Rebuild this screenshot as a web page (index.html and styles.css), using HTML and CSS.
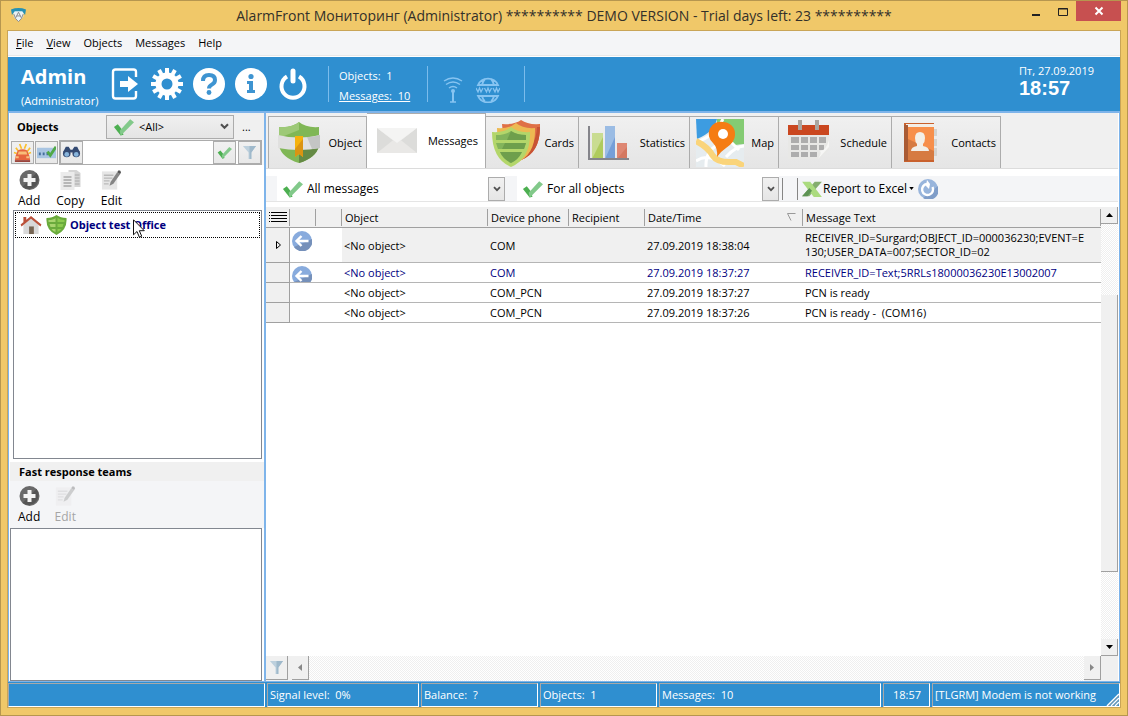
FILE: index.html
```html
<!DOCTYPE html>
<html lang="en">
<head>
<meta charset="utf-8">
<title>AlarmFront</title>
<link rel="stylesheet" href="styles.css">
</head>
<body>
<svg class="defs" aria-hidden="true">
  <symbol id="check" viewBox="0 0 22 18"><path fill="#4caf50" d="M1 9l4-3 4 5 2 6-3 1z"/><path fill="#82c98a" d="M8 18l-1-5L18 1l4 3L9 17z"/></symbol>
  <symbol id="chevron" viewBox="0 0 10 8"><path fill="none" stroke="#505050" stroke-width="2.4" d="M1 1.500l4 4 4-4"/></symbol>
  <symbol id="funnel" viewBox="0 0 16 16"><path fill="#bdd0dd" d="M1 1h14L10 8v7H7V8z"/><path fill="#9fb9cb" d="M8 1h7l-5 7v7H8z"/></symbol>
  <symbol id="add" viewBox="0 0 20 20"><circle cx="10" cy="10" r="10" fill="#696969"/><path fill="#555" d="M17 3a10 10 0 0 1-14 14z"/><path fill="#f4f4f4" d="M8 4h4v4h4v4h-4v4H8v-4H4V8h4z"/></symbol>
  <symbol id="edit" viewBox="0 0 22 20"><path fill="#e6e6e6" d="M1 1h16v19H1z"/><path stroke="#b9b9b9" stroke-width="1.400" d="M3 5h10M3 8h9M3 11h6M3 14h5"/><path fill="#858585" d="M10 12l7-10 3 2-7 10-4 2z"/><path fill="#555" d="M17 2l1-2h2l1 2-1 2z"/></symbol>
  <symbol id="shield" viewBox="0 0 20 20"><path fill="#6aab3c" d="M0 3q6 0 10-3 4 3 10 3 1 12-10 17Q-1 15 0 3z"/><path fill="#a8d46e" d="M2 5q5 0 7-2v4H2zM3 9h6v3H4zM5 14h4v3q-3-1-4-3z"/><path fill="#8ccb4e" d="M11 3q3 2 7 2v2h-7zM11 9h6l-1 3h-5zM11 14h4q-2 2-4 3z"/></symbol>
  <symbol id="incoming" viewBox="0 0 20 20"><circle cx="10" cy="10" r="10" fill="#88abdd"/><path fill="#7590ba" d="M20 8A10 10 0 0 1 2 16z"/><path fill="none" stroke="#fff" stroke-width="2.400" d="M16.500 10H5M9.500 5L4.500 10l5 5"/></symbol>
  <symbol id="doc" viewBox="0 0 20 20"><path fill="#d5d5d5" d="M8 0h8l4 3v14H8z"/><path stroke="#aaa" d="M14 5h5M14 8h5M14 11h5M14 14h5"/><path fill="#ebebeb" d="M0 2h14v18H0z"/><path stroke="#a7a7a7" d="M3 7h8M3 10h8M3 13h8M3 16h8" stroke-width="1.400"/></symbol>
</svg>
<div class="window">
  <header class="titlebar">
    <svg class="app-icon" viewBox="0 0 16 16"><path fill="#e8f2f5" d="M2 2l6-1 6 1-1 8-5 5-5-5z"/><path fill="#2591b4" d="M0 2q8-3 16 0l-1 6-3-4H4L1 8z"/><path fill="none" stroke="#888" d="M3 7l2 5 3 3 3-3 2-5M5 11l3-6 3 6M6 9h4"/></svg>
    <h1>AlarmFront Мониторинг (Administrator) ********** DEMO VERSION - Trial days left: 23 **********</h1>
    <div class="window-buttons">
      <button aria-label="Minimize"><svg viewBox="0 0 10 10"><path fill="#222" d="M1 8h8v2H1z"/></svg></button>
      <button aria-label="Maximize"><svg viewBox="0 0 10 10"><path fill="none" stroke="#222" d="M.500 2.500h9v7h-9zM0 3h10"/></svg></button>
      <button class="close" aria-label="Close"><svg viewBox="0 0 10 10"><path fill="none" stroke="#fff" stroke-width="2" d="M1.500 1.500l7 7M8.500 1.500l-7 7"/></svg></button>
    </div>
  </header>
  <div class="client">
    <nav class="menu">
      <button><u>F</u>ile</button><button><u>V</u>iew</button><button>Objects</button><button>Messages</button><button>Help</button>
    </nav>
    <div class="banner">
      <div class="user"><strong>Admin</strong><span>(Administrator)</span></div>
      <div class="actions">
        <button aria-label="Log out"><svg viewBox="0 0 32 32"><path fill="none" stroke="#fff" stroke-width="2.400" d="M27 9V4q0-2.500-2.500-2.500h-18Q4 1.500 4 4v24q0 2.500 2.500 2.500h18Q27 30.500 27 28v-5"/><path fill="#fff" d="M11 13h8V8l10 8-10 8v-5h-8z"/></svg></button>
        <button aria-label="Settings"><svg viewBox="0 0 32 32"><circle cx="16" cy="16" r="8.500" fill="none" stroke="#fff" stroke-width="6"/><path stroke="#fff" stroke-width="4" d="M16 0v6M16 26v6M0 16h6M26 16h6M8 2.100l2.500 4.400M21.500 25.500l2.500 4.400M24 2.100l-2.500 4.400M10.500 25.500L8 29.900M2.100 8l4.400 2.500M25.500 21.500l4.400 2.500M29.900 8l-4.400 2.500M6.500 21.500L2.100 24"/></svg></button>
        <button aria-label="Help"><svg viewBox="0 0 32 32"><circle cx="16" cy="16" r="16" fill="#fff"/><path fill="none" stroke="#3e94d1" stroke-width="4" d="M10 13q0-6 6-6t6 5q0 3-3 4.500-3 1.500-3 4"/><circle cx="16" cy="24.500" r="2.400" fill="#3e94d1"/></svg></button>
        <button aria-label="Information"><svg viewBox="0 0 32 32"><circle cx="16" cy="16" r="16" fill="#fff"/><circle cx="16" cy="8.500" r="2.600" fill="#3e94d1"/><path fill="#3e94d1" d="M12 13h6v9h2v3h-8v-3h2v-6h-2z"/></svg></button>
        <button aria-label="Power"><svg viewBox="0 0 32 32"><path fill="none" stroke="#fff" stroke-width="4" d="M10 8.500a11.500 11.500 0 1 0 12 0"/><path stroke="#fff" stroke-width="5" stroke-linecap="round" d="M16 3v10"/></svg></button>
      </div>
      <div class="counts"><span>Objects:&nbsp; 1</span><a href="#messages">Messages:&nbsp; 10</a></div>
      <div class="signals">
        <svg viewBox="0 0 24 26"><g fill="none" stroke="#87c4f1" stroke-width="1.500"><path d="M3 4q9-6 18 0M5 7.500q7-5 14 0M8 11q4-3 8 0M9 25h6"/><path stroke-width="2" d="M12 14v11"/></g><circle cx="12" cy="14" r="2" fill="#87c4f1"/></svg>
        <svg viewBox="0 0 24 26"><g fill="none" stroke="#87c4f1" stroke-width="1.800"><path d="M2 8a11 11 0 0 1 20 0zM2 19a11 11 0 0 0 20 0zM9 2Q7 4 6 8M15 2q2 2 3 6M6 19q1 4 3 5M18 19q-1 4-3 5"/><path stroke-width="1.300" d="M0 11l2 4 1.500-4L5 15l2-4M8.500 11l2 4 1.500-4 1.500 4 2-4M17 11l2 4 1.500-4 1.500 4 2-4"/></g></svg>
      </div>
      <div class="clock"><span>Пт, 27.09.2019</span><time>18:57</time></div>
    </div>
    <div class="main">
      <aside class="side">
        <div class="side-head">
          <h2>Objects</h2>
          <div class="combo raised"><svg class="tick"><use href="#check"/></svg><select aria-label="Object filter"><option>&lt;All&gt;</option></select><svg class="chev"><use href="#chevron"/></svg></div>
          <button class="more" aria-label="More">...</button>
        </div>
        <div class="search-row">
          <button class="mini" aria-label="Alarms"><svg viewBox="0 0 20 20"><path stroke="#fbc02d" stroke-width="1.800" d="M3 5l3 4M7 1l2 5M14 1l-2 5M18 5l-3 4M1 10l3 1M19 10l-3 1"/><path fill="#e6643e" d="M5 8q5-3 10 0l2 5 1 5H2l1-5z"/><path fill="#f8bd79" d="M6 9h8l1 3H5zM3 14h3v2H3zM14 14h3v2h-3z"/><path fill="#9b443b" d="M2 18h16v2H2z"/></svg></button>
          <button class="mini" aria-label="Connection"><svg viewBox="0 0 20 20"><path fill="#a9c5e2" d="M0 5h20v11H0z"/><path fill="#456f9b" d="M2 10h2v3H2zM6 10h2v3H6zM10 10h2v3h-2z"/><path fill="none" stroke="#50a947" stroke-width="3" d="M11 9l3 4 6-9"/></svg></button>
          <div class="search">
            <button class="mini" aria-label="Find"><svg viewBox="0 0 20 20"><path fill="#344a72" d="M4 4h3l2 3h2l2-3h3l3 6H1z"/><circle cx="5" cy="11" r="4" fill="#344a72"/><circle cx="15" cy="11" r="4" fill="#344a72"/><circle cx="5" cy="12" r="2.500" fill="#88b5dc"/><circle cx="15" cy="12" r="2.500" fill="#88b5dc"/></svg></button>
            <input type="text" aria-label="Search objects">
            <button class="mini" aria-label="Apply"><svg class="tick-small"><use href="#check"/></svg></button>
            <button class="mini" aria-label="Filter"><svg class="funnel-small"><use href="#funnel"/></svg></button>
          </div>
        </div>
        <div class="tools">
          <button><svg><use href="#add"/></svg>Add</button><button><svg><use href="#doc"/></svg>Copy</button><button><svg><use href="#edit"/></svg>Edit</button>
        </div>
        <ul class="list objects">
          <li><svg class="house" viewBox="0 0 22 20"><path fill="#d8d8d8" d="M3 9l8-7 8 7v10H3z"/><path fill="#756452" d="M9 11h5v8H9z"/><path fill="#bb513a" d="M0 9L11 0l11 9-1 2-10-8L1 11zM3 1h3v4L3 7z"/></svg><svg class="badge"><use href="#shield"/></svg>Object test Office
            <svg class="pointer" viewBox="0 0 12 19"><path fill="#fff" stroke="#111" d="M.500.800v15l3.500-3.300 2.400 5.700 2.300-1-2.400-5.500h5z"/></svg></li>
        </ul>
        <h2 class="teams-title">Fast response teams</h2>
        <div class="tools teams">
          <button><svg><use href="#add"/></svg>Add</button><button disabled><svg><use href="#edit"/></svg>Edit</button>
        </div>
        <ul class="list team-list"></ul>
      </aside>
      <main class="content" id="messages">
        <div class="tabs" role="tablist">
          <button role="tab" class="tab t-object"><svg viewBox="0 0 48 48"><path fill="#80b756" d="M4 8q13 1 20-5 7 6 20 5v14H4z"/><path fill="#9dc977" d="M4 8q13 1 20-5v8L4 19z"/><path fill="#80b756" d="M4 27h40q-3 12-20 17Q7 39 4 27z"/><path fill="#658a45" d="M24 27h20q-3 12-20 17z"/><path fill="#e0e0df" d="M3 16q21 5 42 0v13q-21 4-42 0z"/><path fill="#c4c5c4" d="M32 18q7 0 13-2v13l-8 1z"/><path fill="#f5b20d" d="M20 17h8v21l-4-3-4 3z"/><path fill="#db9412" d="M28 20v18l-4-3-4 3v-8z"/></svg><span>Object</span></button>
          <button role="tab" class="tab t-messages" aria-selected="true"><svg viewBox="0 0 48 48"><path fill="#e9e9e7" d="M4 11h40v25H4z"/><path fill="#dcdcda" d="M4 11l18 14L4 36zM44 11L26 25l18 11z"/><path fill="#e9e8e6" d="M4 36l20-16 20 16z"/><path fill="#f4f4f3" d="M4 11h40L24 26z"/></svg><span>Messages</span></button>
          <button role="tab" class="tab t-cards"><svg viewBox="0 0 48 48"><path fill="#df7046" d="M10 5Q22 6 29 1q7 5 19 4 1 28-19 36-18-10-19-36z"/><path fill="#c85334" d="M45 8h3Q48 34 29 41l-3-4Q44 30 45 8z"/><path fill="#edb952" d="M5 9q12 1 19-5 7 6 19 5 1 27-19 35Q5 36 5 9z"/><path fill="#b3d66a" d="M0 13q12 1 19-5 7 6 19 5 1 26-19 35Q0 40 0 13z"/><path fill="#83b45b" d="M4 16q9 0 15-4 6 4 15 4v5H4zM4 24h30l-2 6H6zM8 33h22q-4 8-11 11-8-4-11-11z"/><path fill="#659646" d="M19 12q6 4 15 4v5H15zM13 24h21l-2 6H10zM8 33h22q-4 8-11 11-8-4-11-11z" opacity=".7"/></svg><span>Cards</span></button>
          <button role="tab" class="tab t-stats"><svg viewBox="0 0 48 48"><path fill="#c9dc91" d="M7 14h11v26H7z"/><path fill="#afcb5d" d="M18 18v22H7z"/><path fill="#9bbce4" d="M20 7h10v33H20z"/><path fill="#759fd8" d="M30 18v22H20z"/><path fill="#de8773" d="M32 24h10v16H32z"/><path fill="#d47861" d="M42 28v12H32z"/><path fill="none" stroke="#85858b" stroke-width="2" d="M4 7v33h40"/></svg><span>Statistics</span></button>
          <button role="tab" class="tab t-map"><svg viewBox="0 0 48 48"><path fill="#e6ecef" d="M0 0h48v48H0z"/><path fill="#84cb73" d="M21 0h27v25l-9 1L21 7z"/><path fill="#3d9ce1" d="M0 0h21q-3 13-20 20z"/><path fill="none" stroke="#fff" stroke-width="3" d="M0 23Q18 18 27 0M10 48q-1-18 16-24M30 38Q40 27 48 27M0 42q13-9 29 5M20 8l23 23"/><path fill="none" stroke="#fad47a" stroke-width="6" d="M0 22q12 6 17 15 4 6 16 6h7l8 4"/><path fill="#f57c13" d="M27 3a12 12 0 0 1 12 13q0 7-9 13-6 4-9 9 1-9-4-14a12 12 0 0 1 10-21z"/><circle cx="27" cy="15" r="5" fill="#fff"/></svg><span>Map</span></button>
          <button role="tab" class="tab t-schedule"><svg viewBox="0 0 48 48"><path fill="#e8e8e6" d="M3 14h41v17L33 40H3z"/><path fill="#ca4720" d="M3 6h41v10H3z"/><path fill="#aaa59f" d="M13 1h4v10h-4zM30 1h4v10h-4z"/><path fill="#adadad" d="M6 18h8v6H6zM16 18h7v6h-7zM25 18h7v6h-7zM34 18h7v6h-7zM6 26h8v5H6zM16 26h7v5h-7zM25 26h7v5h-7zM34 26h5v5h-5zM6 33h8v5H6zM16 33h7v5h-7zM25 33h7v5h-7z"/><path fill="#f6f6f5" d="M44 21v7L33 40q4-6 2-8 6 0 9-11z"/></svg><span>Schedule</span></button>
          <button role="tab" class="tab t-contacts"><svg viewBox="0 0 48 48"><path fill="#d5d3cf" d="M34 10h5v7h-5zM34 20h5v7h-5zM34 29h5v8h-5z"/><path fill="#c9612d" d="M6 4h30v39H6z"/><path fill="#f3eee7" d="M8 5h28v3H8z"/><path fill="#f78f4b" d="M10 8h26v33H10z"/><path fill="#d67b42" d="M36 32v9H10V20z"/><path fill="#aa5b34" d="M6 6h4v36H6z"/><path fill="#f2efe9" d="M17 19q0-6 5-6t5 6q0 4-2 6v2q6 1 6 5H13q0-4 6-5v-2q-2-2-2-6z"/></svg><span>Contacts</span></button>
        </div>
        <div class="filterbar">
          <div class="combo flat first"><svg class="tick"><use href="#check"/></svg><select aria-label="Message type"><option>All messages</option></select><span class="drop"><svg class="chev"><use href="#chevron"/></svg></span></div>
          <div class="combo flat second"><svg class="tick"><use href="#check"/></svg><select aria-label="Objects shown"><option>For all objects</option></select><span class="drop"><svg class="chev"><use href="#chevron"/></svg></span></div>
          <span class="sep"></span>
          <button class="report"><svg class="excel" viewBox="0 0 22 20"><path fill="#84ad6f" d="M14 2h8L8 18H0z"/><path fill="#abdb7f" d="M0 2h9l13 17h-9z"/><path fill="#5d9354" d="M0 18h6l5-6-3-3z"/></svg>Report to Excel<svg class="caret" viewBox="0 0 6 4"><path d="M0 0h6L3 4z"/></svg></button>
          <button class="refresh" aria-label="Refresh"><svg viewBox="0 0 20 20"><circle cx="10" cy="10" r="10" fill="#98b5dc"/><path fill="#7f9dc8" d="M20 7A10 10 0 0 1 5 19z"/><path fill="none" stroke="#fff" stroke-width="2.400" d="M14.500 8A5.500 5.500 0 1 1 9 5"/><path fill="#fff" d="M9 1l3 4-1 5-3-3z"/></svg></button>
        </div>
        <div class="grid-area">
          <div class="table-wrap">
            <table>
              <colgroup><col class="c-mark"><col class="c-icon"><col class="c-icon"><col class="c-object"><col class="c-device"><col class="c-recipient"><col class="c-date"><col></colgroup>
              <thead><tr><th><svg class="lines" viewBox="0 0 18 10"><path stroke="#000" d="M2 .500h16M2 3.500h16M2 6.500h16M2 9.500h16M0 .500h1M0 3.500h1M0 6.500h1M0 9.500h1"/></svg></th><th></th><th></th><th>Object</th><th>Device phone</th><th>Recipient</th><th>Date/Time<svg class="sort" viewBox="0 0 9 8"><path fill="none" stroke="#999" d="M8.500.500h-8L4 7.500"/></svg></th><th>Message Text</th></tr></thead>
              <tbody>
                <tr class="current"><th scope="row"><svg class="marker" viewBox="0 0 5 8"><path fill="none" stroke="#000" d="M.500.500v7L4.500 4z"/></svg></th><td class="ic"><svg><use href="#incoming"/></svg></td><td></td><td>&lt;No object&gt;</td><td>COM</td><td></td><td>27.09.2019 18:38:04</td><td class="msg">RECEIVER_ID=Surgard;OBJECT_ID=000036230;EVENT=E130;USER_DATA=007;SECTOR_ID=02</td></tr>
                <tr class="unread"><th scope="row"></th><td class="ic"><div class="clip"><svg><use href="#incoming"/></svg></div></td><td></td><td>&lt;No object&gt;</td><td>COM</td><td></td><td>27.09.2019 18:37:27</td><td>RECEIVER_ID=Text;5RRLs18000036230E13002007</td></tr>
                <tr><th scope="row"></th><td></td><td></td><td>&lt;No object&gt;</td><td>COM_PCN</td><td></td><td>27.09.2019 18:37:27</td><td>PCN is ready</td></tr>
                <tr><th scope="row"></th><td></td><td></td><td>&lt;No object&gt;</td><td>COM_PCN</td><td></td><td>27.09.2019 18:37:26</td><td>PCN is ready -&nbsp; (COM16)</td></tr>
              </tbody>
            </table>
          </div>
          <div class="vscroll"><button aria-label="Scroll up"><svg viewBox="0 0 7 4"><path d="M3.500 0L7 4H0z"/></svg></button><span class="thumb"></span><button aria-label="Scroll down"><svg viewBox="0 0 7 4"><path d="M0 0h7L3.500 4z"/></svg></button></div>
          <div class="hscroll"><button class="hfilter" aria-label="Filter rows"><svg><use href="#funnel"/></svg></button><button class="h-left" aria-label="Scroll left"><svg viewBox="0 0 4 7"><path fill="#888" d="M4 0v7L0 3.500z"/></svg></button><span class="track"></span><button aria-label="Scroll right"><svg viewBox="0 0 4 7"><path fill="#888" d="M0 0l4 3.500L0 7z"/></svg></button></div>
          <div class="corner"></div>
        </div>
      </main>
    </div>
    <footer class="status">
      <span class="s-blank"></span><span class="s-signal">Signal level:&nbsp; 0%</span><span class="s-balance">Balance:&nbsp; ?</span><span class="s-objects">Objects:&nbsp; 1</span><span class="s-messages">Messages:&nbsp; 10</span><span class="s-time">18:57</span><span class="s-modem"><span class="modem-text">[TLGRM] Modem is not working</span><svg viewBox="0 0 13 13"><path stroke="#fff" stroke-width="1.500" d="M1 13L13 1M5 13l8-8M9 13l4-4"/><path stroke="#a0a0a0" d="M2.500 13L13 2.500M6.500 13L13 6.500M10.500 13l2.500-2.500"/></svg></span>
    </footer>
  </div>
</div>
</body>
</html>
```
FILE: styles.css
```css
* { box-sizing: border-box; }
body { margin: 0; font: 11px/16px "Open Sans", "Noto Sans", sans-serif; color: #000; }
button { margin: 0; padding: 0; border: 0; background: none; font: inherit; color: inherit; }
select, input { font: inherit; color: inherit; border: 0; background: transparent; padding: 0; margin: 0; min-width: 0; }
select { appearance: none; flex: 1; align-self: stretch; }
svg { display: block; flex: none; }
h1, h2, ul { margin: 0; padding: 0; font-size: inherit; }
ul { list-style: none; }
.defs { position: absolute; width: 0; height: 0; }

.window { display: flex; flex-direction: column; min-height: 100vh; background: #f0c869; border: 1px solid #b6964f; padding: 0 6px 7px; }
.titlebar { display: grid; grid-template-columns: 104px 1fr 104px; height: 29px; }
.app-icon { width: 15px; height: 16px; margin: 6px 0 0 4px; }
.titlebar h1 { font-size: 14px; line-height: 30px; font-weight: 400; text-align: center; color: #33302a; white-space: nowrap; }
.window-buttons { display: flex; justify-content: flex-end; align-items: flex-start; }
.window-buttons button { width: 27px; height: 20px; display: grid; place-items: center; }
.window-buttons svg { width: 10px; height: 10px; }
.window-buttons .close { width: 45px; background: #c75050; }

.client { flex: 1; display: flex; flex-direction: column; border: 1px solid #c9a557; background: #fff; }
.menu { display: flex; gap: 13px; height: 25px; padding-left: 8px; background: #f4f5f7; border-bottom: 1px solid #e8e8e8; margin-bottom: 1px; }

.banner { display: flex; height: 54px; background: #2f8fd0; color: #fff; }
.user { width: 96px; padding: 9px 0 0 13px; }
.user strong { display: block; font-size: 20px; line-height: 22px; }
.user span { display: block; line-height: 26px; }
.actions { display: flex; gap: 10px; padding: 11px 0 0 5px; width: 224px; }
.actions button, .actions svg { width: 32px; height: 32px; }
.counts { display: flex; flex-direction: column; width: 99px; padding-left: 10px; border-left: 1px solid #7bbcec; margin: 9px 0; height: 36px; line-height: 20px; }
.counts a { color: #fff; }
.signals { display: flex; gap: 11px; width: 98px; height: 36px; margin: 9px 0; padding: 11px 0 0 13px; border-left: 1px solid #7bbcec; border-right: 1px solid #7bbcec; }
.signals svg { width: 24px; height: 26px; }
.clock { margin-left: auto; width: 101px; padding-top: 6px; }
.clock span, .clock time { display: block; }
.clock time { font: bold 20px/18px "Liberation Sans", Arial, sans-serif; }

.main { flex: 1; display: grid; grid-template-columns: 257px minmax(0, 1fr); border: 1px solid #7eb4ea; border-top-width: 2px; min-height: 571px; }
.side { display: flex; flex-direction: column; background: #fff; border-right: 2px solid #7eb4ea; padding-left: 1px; }
.side-head { display: flex; align-items: center; height: 27px; background: #f0f0f0; padding-left: 7px; }
.side-head h2 { width: 89px; }
.combo { display: flex; align-items: center; }
.raised { width: 128px; height: 24px; border: 1px solid #acacac; background: linear-gradient(#f0f0f0, #e5e5e5); padding: 0 4px 0 6px; gap: 5px; }
.tick { width: 21px; height: 18px; }
.chev { width: 9px; height: 7px; }
.more { margin-left: 8px; }
.search-row { display: flex; gap: 1px; height: 25px; padding: 0 2px 0 1px; background: #f7f7f7; }
.mini { width: 23px; height: 23px; border: 1px solid #acacac; background: linear-gradient(#f1f1f1, #e8e8e8); display: grid; place-items: center; flex: none; }
.search-row > .mini { margin-top: 1px; }
.mini svg { width: 19px; height: 19px; }
.mini .tick-small { width: 15px; height: 13px; }
.mini .funnel-small { width: 15px; height: 15px; }
.search { flex: 1; min-width: 0; display: flex; gap: 2px; border: 1px solid #acacac; height: 25px; background: #fff; }
.search input { flex: 1; width: 0; }
.tools { display: flex; gap: 16px; height: 45px; padding: 5px 8px 0; font-size: 12px; }
.tools button { display: flex; flex-direction: column; align-items: center; gap: 3px; min-width: 22px; }
.tools svg { width: 21px; height: 20px; }
.list { border: 1px solid #828790; background: #fff; margin-right: 2px; }
.objects { flex: 1; margin-left: 3px; padding: 1px; }
.objects li { position: relative; display: flex; align-items: center; height: 26px; border: 1px dotted #000; padding-left: 4px; color: #00007f; font-weight: 700; }
.house { width: 22px; height: 19px; margin-right: 4px; }
.badge { width: 21px; height: 20px; margin-right: 3px; }
.pointer { position: absolute; left: 117px; top: 6px; width: 12px; height: 19px; }
.teams-title { height: 19px; line-height: 19px; margin-top: 3px; background: #f0f0f0; padding-left: 9px; }
.teams { background: #f4f5f7; height: 47px; gap: 14px; }
.tools button:disabled { color: #a5a5a5; }
.tools button:disabled svg { opacity: .35; }
.team-list { height: 153px; }

.content { display: flex; flex-direction: column; min-width: 0; padding-right: 1px; }
.tabs { display: flex; align-items: flex-end; height: 56px; padding: 1px 0 0 2px; background: #f0f0f0; border-bottom: 1px solid #dcdcdc; }
.tab { display: flex; align-items: center; justify-content: space-between; height: 52px; padding: 0 4px 0 6px; border: 1px solid #acacac; border-bottom: 0; border-left-width: 0; background: linear-gradient(#f0f0f0, #e5e5e5); }
.tab svg { width: 48px; height: 48px; }
.tab[aria-selected] { height: 55px; background: #fff; padding-right: 7px; }
.t-object { width: 99px; border-left-width: 1px; }
.t-messages { width: 119px; }
.t-cards { width: 93px; }
.t-stats { width: 111px; }
.t-map { width: 89px; }
.t-schedule { width: 113px; }
.t-contacts { width: 109px; }
.filterbar { display: flex; align-items: center; height: 26px; margin: 7px 0 5px; background: #f4f5f7; border-bottom: 1px solid #e5e5e5; padding-left: 11px; font-size: 12px; }
.flat { height: 25px; background: #fff; padding-left: 5px; gap: 4px; }
.flat.first { width: 228px; }
.flat.second { width: 262px; margin-left: 12px; }
.drop { display: grid; place-items: center; width: 17px; height: 24px; border: 1px solid #acacac; background: linear-gradient(#f1f1f1, #e6e6e6); }
.drop .chev { width: 8px; height: 6px; }
.sep { width: 16px; height: 22px; border: 1px solid #858585; border-width: 0 1px; margin: 0 3px; }
.report { display: flex; align-items: center; }
.excel { width: 22px; height: 18px; }
.caret { width: 5px; height: 3px; margin-left: 2px; }
.refresh { margin-left: 4px; }
.refresh svg { width: 20px; height: 20px; }

.grid-area { flex: 1; display: grid; grid-template-columns: minmax(0, 1fr) 17px; grid-template-rows: 1fr 25px; }
.table-wrap { overflow: hidden; }
table { width: 100%; table-layout: fixed; border-collapse: separate; border-spacing: 0; }
.c-mark { width: 24px; }
.c-icon { width: 26px; }
.c-object { width: 146px; }
.c-device { width: 81px; }
.c-recipient { width: 76px; }
.c-date { width: 158px; }
th, td { padding: 0 2px; height: 20px; font-weight: 400; text-align: left; border-bottom: 1px solid #b5b5b5; white-space: nowrap; vertical-align: middle; line-height: 15px; }
thead th { position: relative; height: 21px; background: #f0f0f0; border-color: #a0a0a0; padding-left: 3px; }
thead th::after { content: ""; position: absolute; right: 0; top: 2px; bottom: 1px; width: 1px; background: #a0a0a0; }
tbody th { background: #f0f0f0; border-color: #a0a0a0; border-right: 1px solid #a0a0a0; }
.current td { height: 35px; background: #f0f0f0; }
.current td:nth-child(2), .current td:nth-child(3) { background: #fff; }
.current .msg { white-space: normal; word-break: break-all; padding-right: 12px; line-height: 14px; }
.unread { color: #00007f; }
.ic svg { width: 20px; height: 20px; }
.current .ic { vertical-align: top; padding-top: 3px; }
.clip { height: 16px; margin-top: 3px; overflow: hidden; }
.lines { width: 18px; height: 10px; }
.marker { width: 5px; height: 8px; margin-left: 8px; }
.sort { position: absolute; right: 7px; top: 6px; width: 9px; height: 8px; }
.vscroll, .track { background: repeating-conic-gradient(#efefef 0 25%, #fff 0 50%) 0 0 / 2px 2px; }
.vscroll { display: flex; flex-direction: column; }
.vscroll button, .hscroll button { display: grid; place-items: center; width: 17px; height: 17px; background: #f0f0f0; border: 1px solid #a0a0a0; border-width: 0 1px 1px 0; }
.vscroll svg { width: 7px; height: 4px; }
.thumb { height: 277px; margin: 71px 0 auto; background: #f0f0f0; border: 1px solid #a0a0a0; border-width: 0 1px 1px 0; }
.hscroll { display: flex; background: #f0f0f0; }
.hscroll button { height: 24px; }
.hscroll svg { width: 4px; height: 7px; }
.hscroll .hfilter { width: 22px; margin-right: 4px; }
.hscroll .hfilter svg { width: 15px; height: 15px; }
.track { flex: 1; }
.corner { background: #f0f0f0; }

.status { display: flex; gap: 2px; height: 25px; background: #2f8fd0; padding-top: 1px; color: #fff; }
.status > span { height: 24px; line-height: 22px; padding-left: 2px; border: 1px solid #a8a8a8; border-right-color: #fff; border-bottom-color: #fff; white-space: nowrap; overflow: hidden; }
.s-blank { width: 257px; }
.s-signal { width: 152px; }
.s-balance { width: 117px; }
.s-objects { width: 117px; }
.s-messages { width: 222px; }
.status .s-time { width: 47px; padding-left: 9px; }
.s-modem { flex: 1; min-width: 0; display: flex; align-items: flex-end; }
.modem-text { flex: 1; min-width: 0; overflow: hidden; margin-right: 4px; }
.s-modem svg { width: 13px; height: 13px; }
```
